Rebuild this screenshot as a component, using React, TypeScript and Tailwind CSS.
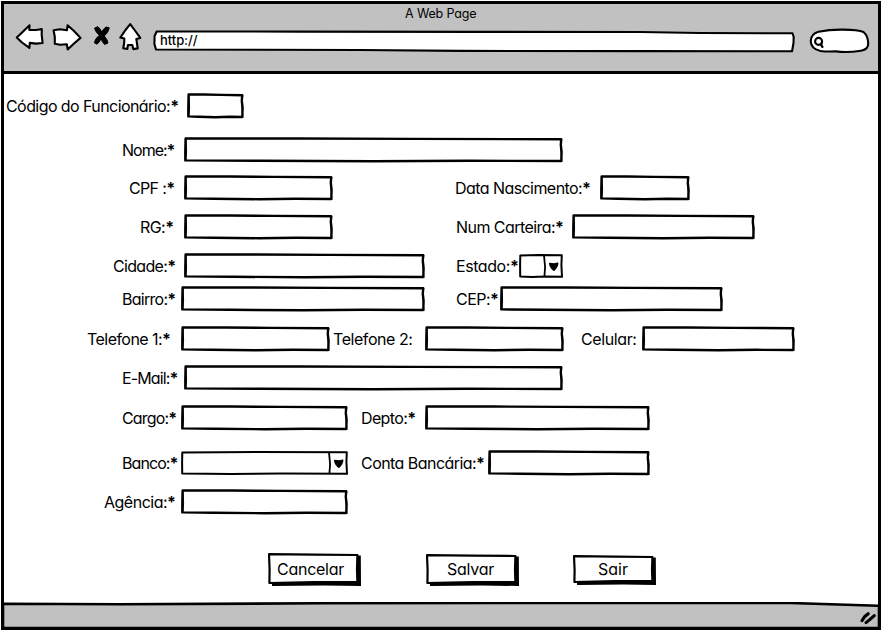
import { useLayoutEffect, useRef } from "react";
import type { ReactNode } from "react";
import { clsx } from "clsx";

/** Text whose tracking is adjusted so that it fills exactly `width` pixels. */
function FitText({ text, width, className }: { text: string; width: number; className?: string }) {
  const ref = useRef<HTMLSpanElement>(null);
  const required = text.endsWith("*");
  useLayoutEffect(() => {
    const el = ref.current;
    if (!el) return;
    el.style.letterSpacing = "0px";
    const natural = el.getBoundingClientRect().width;
    el.style.letterSpacing = `${(width - natural) / text.length}px`;
  }, [text, width]);
  return (
    <span ref={ref} className={clsx("inline-block whitespace-pre", className)}>
      {required ? text.slice(0, -1) : text}
      {required && <span className="font-bold">*</span>}
    </span>
  );
}

function Label({ text, width, className }: { text: string; width: number; className: string }) {
  return (
    <label className={clsx("shrink-0 pl-px text-base leading-[26px]", className)}>
      <FitText text={text} width={width - 1.5} />
    </label>
  );
}

/** Hand-drawn text input outline. */
function Field({ w, className }: { w: number; className: string }) {
  return (
    <div className={clsx("h-[26px] shrink-0", className)}>
      <svg className="block h-full w-full" viewBox={`0 0 ${w} 26`} fill="none" stroke="black" strokeLinejoin="round">
        <path
          strokeWidth="2.4"
          d={`M1.6 1.5 L${w * 0.3} 1.5 L${w * 0.6} 1.9 L${w - 1.8} 2.2 L${w - 2.2} 8 L${w - 1.4} 15 L${w - 1.7} 24 L${w * 0.75} 23.8 L${w * 0.5} 24.2 L${w * 0.2} 23.8 L1.3 23.4 L1.3 15 Z`}
        />
        <path strokeWidth="1" d={`M2 2 L2.6 14 L2 23 M${w - 1.2} 2 L${w - 2.2} 12 L${w - 1.1} 25`} />
      </svg>
    </div>
  );
}

function Select({ w, arrow, className }: { w: number; arrow: number; className: string }) {
  const d = w - arrow;
  return (
    <div className={clsx("h-[26px] shrink-0", className)}>
      <svg className="block h-full w-full" viewBox={`0 0 ${w} 26`} fill="none" stroke="black" strokeLinejoin="round">
        <path
          strokeWidth="2"
          d={`M1.3 2.6 L${w * 0.45} 2 L${w - 1.2} 2.3 L${w - 1.6} 12 L${w - 1} 23.8 L${w * 0.6} 23.6 L${w * 0.3} 24 L1.2 23.6 L1.1 12 Z`}
        />
        <path strokeWidth="1.8" d={`M${d} 2.5 L${d + 1.1} 14 L${d + 0.4} 24`} />
        <path
          fill="black"
          strokeWidth="1.2"
          d={`M${w - 13.4} 10.4 L${w - 9} 10.9 L${w - 5.2} 10 Q${w - 5} 13.4 ${w - 9} 17.4 Q${w - 12.8} 14.8 ${w - 13.4} 10.4 Z`}
        />
      </svg>
    </div>
  );
}

function Row({ className, children }: { className: string; children: ReactNode }) {
  return <div className={clsx("flex h-[26px] items-center", className)}>{children}</div>;
}

function SketchButton({
  text,
  textWidth,
  w,
  h,
  className,
  textClass,
}: {
  text: string;
  textWidth: number;
  w: number;
  h: number;
  className: string;
  textClass: string;
}) {
  return (
    <button type="button" className={clsx("relative shrink-0 text-left text-base", className)}>
      <svg className="absolute inset-0 h-full w-full" viewBox={`0 0 ${w} ${h}`}>
        <path d={`M4 5 L${w - 0.2} 2.5 L${w} ${h} L${w * 0.6} ${h - 0.5} L4 ${h - 0.1} Z`} />
        <path
          d={`M1 1.2 L${w * 0.5} 1.6 L${w - 3.6} 2 L${w - 4} ${h * 0.5} L${w - 3.6} ${h - 4} L${w * 0.5} ${h - 3.8} L1.4 ${h - 3} L1.6 ${h * 0.5} Z`}
          fill="white"
          stroke="black"
          strokeWidth="2.2"
          strokeLinejoin="round"
        />
      </svg>
      <span className={clsx("relative block leading-[20px]", textClass)}>
        <FitText text={text} width={textWidth} />
      </span>
    </button>
  );
}

function Toolbar() {
  return (
    <div className="flex h-[48px] items-start pl-[11px]">
      <svg className="h-[30px] w-[30px] shrink-0" viewBox="15 22 30 30" fill="white" stroke="black" strokeWidth="2.1" strokeLinejoin="round">
        <path d="M16.8 37.5 L21 33.4 L29.5 25.3 L29.3 29.9 L36 30 L41.8 29.1 L41.7 35 L42.6 43 L36 43.6 L29.8 42.9 L29.4 47.9 L22 42.5 Z" />
      </svg>
      <svg className="ml-[7px] h-[30px] w-[31px] shrink-0" viewBox="52 22 31 30" fill="white" stroke="black" strokeWidth="2.1" strokeLinejoin="round">
        <path d="M53.6 30.2 L60 29.2 L67 30.2 L67.6 25.2 L74 31 L80.5 37.9 L74 43.5 L67.7 49.4 L66.8 44.2 L60 44.7 L54.8 43.8 L54.8 37 Z" />
      </svg>
      <svg className="ml-[9px] h-[30px] w-[20px] shrink-0" viewBox="92 22 20 30" stroke="black" strokeWidth="1" strokeLinejoin="round">
        <path d="M94.5 28.2 L97.8 26.6 Q100.5 29 101.7 32 Q103.5 28.5 106.2 27 L109.3 27.8 Q108.5 32.5 104.2 36 Q107.5 39.5 108 43 L104.7 44.5 Q102 42 101 38.7 Q99.5 42.5 97 44.2 L94.3 42.8 Q95.2 38 99.3 35.4 Q95.5 31.8 94.5 28.2 Z" />
      </svg>
      <svg className="ml-[6px] h-[30px] w-[25px] shrink-0" viewBox="118 22 25 30" fill="white" stroke="black" strokeWidth="2.1" strokeLinejoin="round">
        <path d="M130.2 24.2 L125.5 30 L120.3 37.6 L124.3 38.6 L124.2 43 L123.2 48.3 L127.3 49 L127.9 45 L132.3 45 L133.3 49.1 L137.7 48.4 L136.3 38.9 L140.3 37.9 L135.3 31 Z" />
      </svg>
      <div className="relative ml-[9px] mt-[6px] h-[25px] w-[645px] shrink-0">
        <svg className="absolute inset-0 h-full w-full" viewBox="152 28 645 25" fill="white" stroke="black" strokeWidth="2.1" strokeLinejoin="round">
          <path d="M156.7 31.5 L300 31.6 L480 31.9 L640 32 L700 33 L792.5 33.3 L793.7 37 L793.5 43 L792 51.3 L640 51.1 L460 50.9 L360 50 L156 49.5 L154.4 44 L154.6 36 Z" />
        </svg>
        <div className="relative pl-[8px] pt-[2px] text-[13px] font-medium leading-[20px]">
          <FitText text="http://" width={37.5} />
        </div>
      </div>
      <svg className="ml-[11px] mt-[5px] h-[28px] w-[64px] shrink-0" viewBox="808 27 64 28" fill="white" stroke="black" strokeWidth="2.1" strokeLinejoin="round">
        <path d="M810.7 41 Q811 34 818.5 31.8 Q829 29.5 842 29.6 Q858 29.5 863.5 32 Q868 36 868.2 43 Q868.5 49.5 861 50.7 Q847 53 836 51.4 Q826 51.8 820.5 51 Q811 49 810.7 41 Z" />
        <circle cx="818.6" cy="41.4" r="3.5" fill="none" strokeWidth="2.1" />
        <path d="M821.3 43.6 L821.4 45.3 L822.4 46.8" strokeWidth="2.4" strokeLinecap="round" />
      </svg>
    </div>
  );
}

export default function App() {
  return (
    <div className="h-[631px] w-[882px] overflow-hidden bg-white pl-px pt-px font-[Inter,'Noto_Sans',sans-serif] text-black [font-feature-settings:'cv11']">
      <div className="flex h-[629px] w-[880px] flex-col border-[3px] border-black">
        <header className="h-[70px] shrink-0 border-b-[3px] border-black bg-[#c1c1c1]">
          <div className="h-[18px] pl-[401px] text-[12.5px] leading-[19px]">
            <FitText text="A Web Page" width={71.5} />
          </div>
          <Toolbar />
        </header>

        <main className="min-h-0 flex-1">
          <Row className="mt-[19px]">
            <Label text="Código do Funcionário:*" width={174} className="ml-[1px] w-[182px]" />
            <Field w={57} className="w-[57px]" />
          </Row>
          <Row className="mt-[18px]">
            <Label text="Nome:*" width={54} className="ml-[117px] w-[63px]" />
            <Field w={379} className="w-[379px]" />
          </Row>
          <Row className="mt-[12px]">
            <Label text="CPF :*" width={47} className="ml-[124px] w-[56px]" />
            <Field w={149} className="w-[149px]" />
            <Label text="Data Nascimento:*" width={137} className="ml-[121px] w-[146px]" />
            <Field w={90} className="w-[90px]" />
          </Row>
          <Row className="mt-[13px]">
            <Label text="RG:*" width={35} className="ml-[135px] w-[45px]" />
            <Field w={149} className="w-[149px]" />
            <Label text="Num Carteira:*" width={109} className="ml-[122px] w-[117px]" />
            <Field w={183} className="w-[183px]" />
          </Row>
          <Row className="mt-[13px]">
            <Label text="Cidade:*" width={64} className="ml-[108px] w-[72px]" />
            <Field w={241} className="w-[241px]" />
            <Label text="Estado:*" width={64} className="ml-[30px] w-[64px]" />
            <Select w={44} arrow={19} className="w-[44px]" />
          </Row>
          <Row className="mt-[7px]">
            <Label text="Bairro:*" width={55} className="ml-[117px] w-[60px]" />
            <Field w={244} className="w-[244px]" />
            <Label text="CEP:*" width={44} className="ml-[30px] w-[45px]" />
            <Field w={223} className="w-[223px]" />
          </Row>
          <Row className="mt-[14px]">
            <Label text="Telefone 1:*" width={85} className="ml-[82px] w-[95px]" />
            <Field w={149} className="w-[149px]" />
            <Label text="Telefone 2:" width={81} className="ml-[2px] w-[93px]" />
            <Field w={139} className="w-[139px]" />
            <Label text="Celular:" width={57} className="ml-[16px] w-[62px]" />
            <Field w={153} className="w-[153px]" />
          </Row>
          <Row className="mt-[13px]">
            <Label text="E-Mail:*" width={57} className="ml-[117px] w-[63px]" />
            <Field w={379} className="w-[379px]" />
          </Row>
          <Row className="mt-[14px]">
            <Label text="Cargo:*" width={56} className="ml-[117px] w-[60px]" />
            <Field w={167} className="w-[167px]" />
            <Label text="Depto:*" width={56} className="ml-[12px] w-[65px]" />
            <Field w={225} className="w-[225px]" />
          </Row>
          <Row className="mt-[19px]">
            <Label text="Banco:*" width={57} className="ml-[117px] w-[60px]" />
            <Select w={167} arrow={19} className="w-[167px]" />
            <Label text="Conta Bancária:*" width={125} className="ml-[12px] w-[128px]" />
            <Field w={162} className="w-[162px]" />
          </Row>
          <Row className="mt-[13px]">
            <Label text="Agência:*" width={73} className="ml-[99px] w-[78px]" />
            <Field w={167} className="w-[167px]" />
          </Row>
          <div className="mt-[38px] flex items-start">
            <SketchButton text="Cancelar" textWidth={67} w={93} h={33} className="ml-[264px] h-[33px] w-[93px]" textClass="-mt-[2px] pl-[9px]" />
            <SketchButton text="Salvar" textWidth={47} w={93} h={32} className="ml-[65px] mt-px h-[32px] w-[93px]" textClass="-mt-[2px] pl-[21px]" />
            <SketchButton text="Sair" textWidth={30} w={83} h={30} className="ml-[54px] mt-[2px] h-[30px] w-[83px]" textClass="-mt-[2px] pl-[25px]" />
          </div>
        </main>

        <footer className="h-[25px] shrink-0">
          <svg className="block h-full w-full" viewBox="4 602 874 25" preserveAspectRatio="none">
            <path
              d="M3 603.7 L120 604.3 L320 603.3 L520 602.9 L790 603 L879 605.8 L879 628 L3 628 Z"
              fill="#c1c1c1"
              stroke="black"
              strokeWidth="2.6"
            />
            <path
              d="M862 620.6 L864.5 616.8 L868.2 613.7 M866 622.6 L870 619.4 L874.3 615.6"
              fill="none"
              stroke="black"
              strokeWidth="3.1"
              strokeLinecap="round"
              strokeLinejoin="round"
            />
          </svg>
        </footer>
      </div>
    </div>
  );
}
